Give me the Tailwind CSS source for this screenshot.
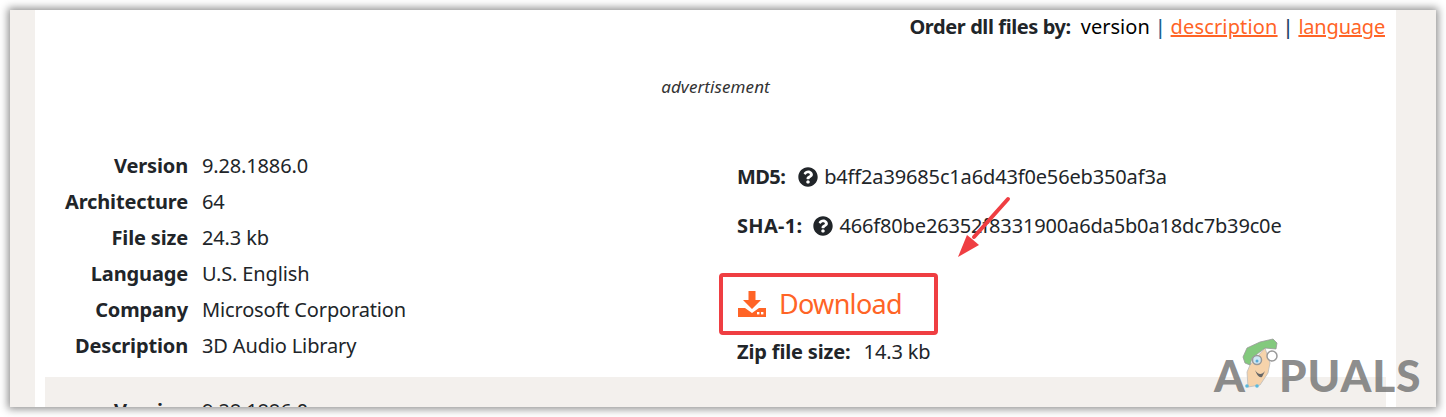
<!DOCTYPE html>
<html lang="en">
<head>
  <meta charset="UTF-8">
  <title>Download DLL</title>
  <script src="https://cdn.jsdelivr.net/npm/@tailwindcss/browser@4"></script>
</head>
<body class="bg-white h-[417px] overflow-hidden font-['Noto_Sans',sans-serif] text-[#212529]">
  <div class="relative ml-[10px] mt-[10px] w-[1426px] h-[397px] overflow-hidden bg-[#f3f0ed] px-[25px] shadow-[0_0_8px_2px_rgba(0,0,0,0.45)]">
    <main class="w-[1361px] h-full bg-white px-[10px] overflow-hidden">
      <!-- sort links -->
      <p class="h-[34px] pr-[1px] pt-[2px] text-right text-[20px] leading-[30px] tracking-[-0.2px]">
        <b class="font-bold mr-[5px] tracking-[-0.4px]">Order dll files by:</b> <span class="text-black tracking-[0px]">version</span> <span class="text-[#1d5f8f] font-medium">|</span>
        <a class="text-[#ff6426] underline tracking-[0.15px]">description</a> <span class="text-[#1d3f66] font-medium">|</span>
        <a class="text-[#ff6426] underline">language</a>
      </p>
      <p class="h-[104px] pt-[31px] text-center text-[17px] leading-[24px] italic text-[#333] tracking-[0.1px]">advertisement</p>

      <!-- dll version -->
      <section class="grid grid-cols-[692px_1fr] h-[229px]">
        <dl class="grid grid-cols-[143px_1fr] gap-x-[14px] content-start text-[20px] leading-[36px] tracking-[-0.15px]">
          <dt class="text-right font-bold tracking-[-0.15px]">Version</dt><dd>9.28.1886.0</dd>
          <dt class="text-right font-bold tracking-[-0.15px]">Architecture</dt><dd>64</dd>
          <dt class="text-right font-bold tracking-[-0.15px]">File size</dt><dd>24.3 kb</dd>
          <dt class="text-right font-bold tracking-[-0.15px]">Language</dt><dd>U.S. English</dd>
          <dt class="text-right font-bold tracking-[-0.15px]">Company</dt><dd>Microsoft Corporation</dd>
          <dt class="text-right font-bold tracking-[-0.15px]">Description</dt><dd>3D Audio Library</dd>
        </dl>
        <div class="text-[20px] leading-[30px] tracking-[-0.15px]">
          <p class="mt-[14px] flex items-center"><b class="font-bold tracking-[-0.6px]">MD5:</b>
            <svg class="ml-[13px] mr-[6px] w-[20px] h-[20px]" viewBox="0 0 512 512" fill="#212529"><path d="M504 256c0 137-111 248-248 248S8 393 8 256 119 8 256 8s248 111 248 248zM263 90c-54 0-89 23-116 64-4 5-2 12 3 16l35 26c5 4 13 3 17-2 18-23 30-36 57-36 20 0 45 13 45 33 0 15-12 22-32 33-23 13-54 30-54 71v6c0 7 5 12 12 12h56c7 0 12-5 12-12v-2c0-29 83-30 83-107 0-57-60-102-118-102zm-7 247c-24 0-44 20-44 44s20 44 44 44 44-20 44-44-20-44-44-44z"/></svg>
            <span>b4ff2a39685c1a6d43f0e56eb350af3a</span></p>
          <p class="mt-[19px] flex items-center"><b class="font-bold tracking-[0.3px]">SHA-1:</b>
            <svg class="ml-[11px] mr-[6px] w-[20px] h-[20px]" viewBox="0 0 512 512" fill="#212529"><path d="M504 256c0 137-111 248-248 248S8 393 8 256 119 8 256 8s248 111 248 248zM263 90c-54 0-89 23-116 64-4 5-2 12 3 16l35 26c5 4 13 3 17-2 18-23 30-36 57-36 20 0 45 13 45 33 0 15-12 22-32 33-23 13-54 30-54 71v6c0 7 5 12 12 12h56c7 0 12-5 12-12v-2c0-29 83-30 83-107 0-57-60-102-118-102zm-7 247c-24 0-44 20-44 44s20 44 44 44 44-20 44-44-20-44-44-44z"/></svg>
            <span>466f80be26352f8331900a6da5b0a18dc7b39c0e</span></p>
          <div class="mt-[32px] ml-[-18px] w-[219px] h-[62px] border-[4px] border-[#ef3e42] rounded-[4px] flex items-center pl-[15px] text-[#ff6426]">
            <svg class="w-[28px] h-[26px]" viewBox="0 0 28 26" fill="#ff6426"><path d="M10.5 0h7v9h5.5L14 18 5 9h5.5z"/><path d="M0 17h7l7 5 7-5h7v9H0z"/><rect x="19" y="21" width="2.4" height="2.4" fill="#fff"/><rect x="23" y="21" width="2.4" height="2.4" fill="#fff"/></svg>
            <span class="ml-[13px] text-[27px] tracking-[-0.7px]">Download</span>
          </div>
          <p class="mt-[2px]"><b class="font-bold tracking-[-0.15px] mr-[8px]">Zip file size:</b> 14.3 kb</p>
        </div>
      </section>

      <!-- next version, cut off -->
      <section class="h-[60px] bg-[#f3f0ed] pt-[16px]">
        <dl class="grid grid-cols-[143px_1fr] gap-x-[14px] text-[20px] leading-[36px] tracking-[-0.15px]">
          <dt class="text-right font-bold tracking-[-0.15px]">Version</dt><dd>9.28.1886.0</dd>
        </dl>
      </section>
    </main>

    <!-- annotation arrow -->
    <svg class="absolute left-[940px] top-[185px] w-[70px] h-[75px]" viewBox="0 0 70 75" fill="none">
      <path d="M58 4 L24 42" stroke="#ef3e42" stroke-width="4" stroke-linecap="round"/>
      <path d="M8 62 L17 40 L22 44 L29 50 Z" fill="#ef3e42"/>
    </svg>

    <!-- watermark -->
    <div class="absolute left-[1204px] top-[335px] flex items-center h-[60px] text-[#6f6f6f]/80 font-['Lato',sans-serif] font-black text-[44px] leading-none">
      <span>A</span>
      <svg class="w-[38px] h-[60px] -mx-[2px] overflow-visible" viewBox="0 0 38 60">
        <path d="M7 20 L4 27 L5 42 L17 40 L25 28 L27 18 L22 3 Z" fill="#f6d3ab" stroke="#bbb" stroke-width="0.8"/>
        <path d="M0 12 L4 3 L17 -3 L30 -6 L34 -2 L33 4 L22 3 L9 13 L7 20 L2 18 Z" fill="#83c97d" stroke="#999" stroke-width="0.8"/>
        <circle cx="14" cy="15" r="4.5" fill="#cfe8f5" stroke="#999" stroke-width="1.5"/>
        <circle cx="29" cy="11" r="5" fill="#fff" stroke="#999" stroke-width="1.5"/>
        <circle cx="14" cy="16" r="1.5" fill="#5aa9d6"/>
        <path d="M12 25 C15 30 19 30 22 26 L19 32 C16 33 14 30 12 25 Z" fill="#666"/>
        <circle cx="4" cy="41" r="1.8" fill="#5ab9dd"/>
        <circle cx="14" cy="41" r="1.8" fill="#5ab9dd"/>
      </svg>
      <span class="tracking-[1px]">PUALS</span>
    </div>
  </div>
</body>
</html>
